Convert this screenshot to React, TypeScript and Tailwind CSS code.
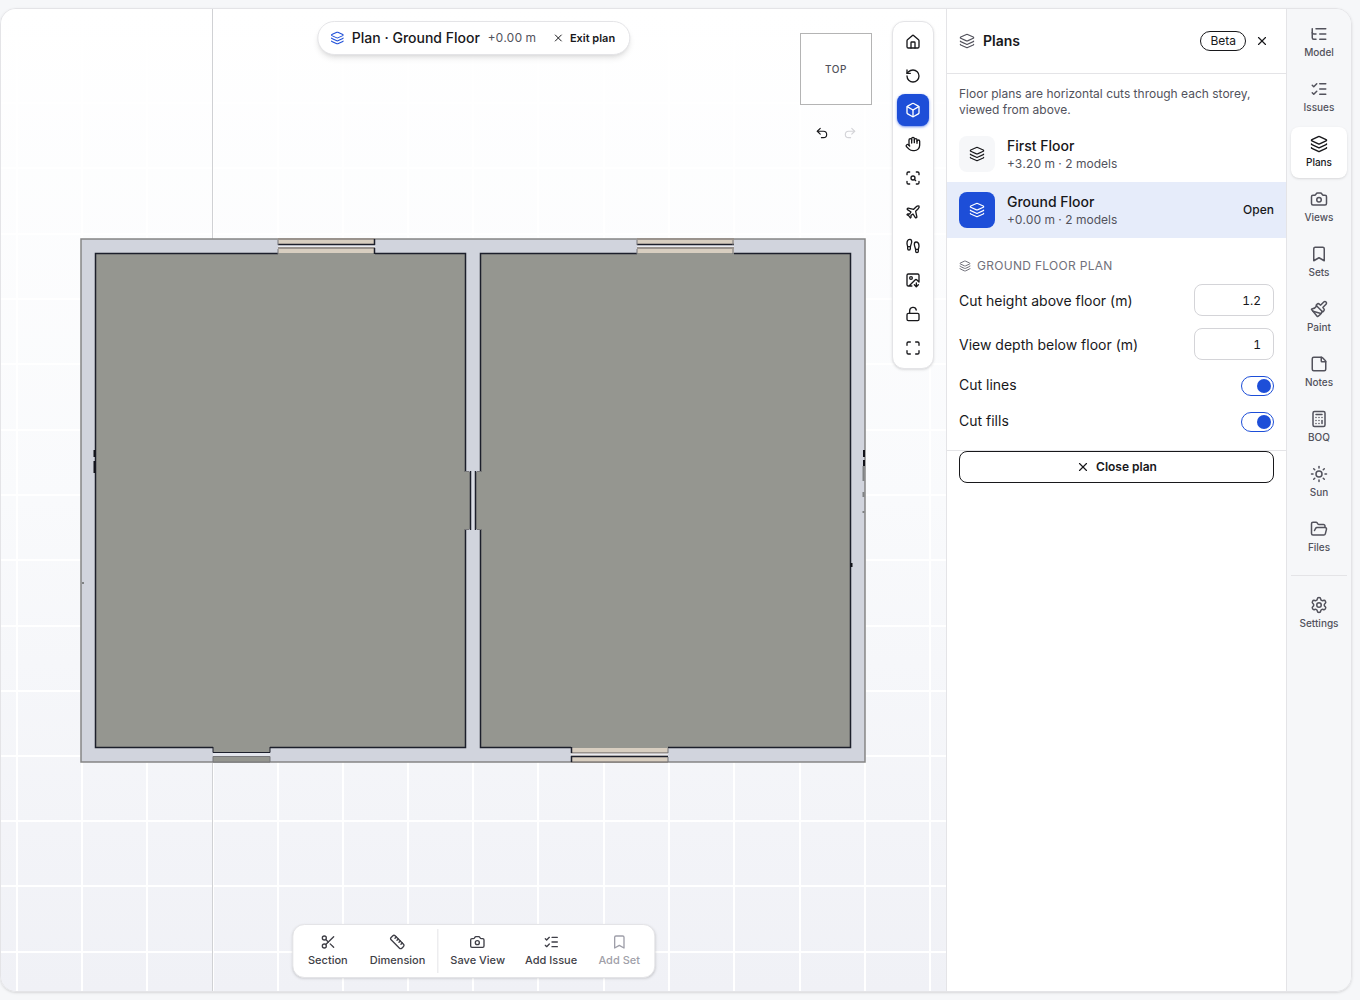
import { useState } from "react";
import {
  Bookmark,
  Box,
  Calculator,
  Camera,
  FolderOpen,
  Footprints,
  Hand,
  House,
  ImageDown,
  Layers,
  ListChecks,
  ListTree,
  LockOpen,
  Maximize,
  Paintbrush,
  Plane,
  Redo2,
  RotateCcw,
  Ruler,
  ScanSearch,
  Scissors,
  Settings,
  StickyNote,
  Sun,
  Undo2,
  X,
  type LucideIcon,
} from "lucide-react";
import clsx from "clsx";

interface Item {
  label: string;
  icon: LucideIcon;
  disabled?: boolean;
}

const railItems: Item[] = [
  { label: "Model", icon: ListTree },
  { label: "Issues", icon: ListChecks },
  { label: "Plans", icon: Layers },
  { label: "Views", icon: Camera },
  { label: "Sets", icon: Bookmark },
  { label: "Paint", icon: Paintbrush },
  { label: "Notes", icon: StickyNote },
  { label: "BOQ", icon: Calculator },
  { label: "Sun", icon: Sun },
  { label: "Files", icon: FolderOpen },
];

const viewTools: Item[] = [
  { label: "Home view", icon: House },
  { label: "Reset", icon: RotateCcw },
  { label: "Orbit", icon: Box },
  { label: "Pan", icon: Hand },
  { label: "Zoom to selection", icon: ScanSearch },
  { label: "Fly", icon: Plane },
  { label: "Walk", icon: Footprints },
  { label: "Export image", icon: ImageDown },
  { label: "Unlock", icon: LockOpen },
  { label: "Fullscreen", icon: Maximize },
];

const measureActions: Item[] = [
  { label: "Section", icon: Scissors },
  { label: "Dimension", icon: Ruler },
];

const addActions: Item[] = [
  { label: "Save View", icon: Camera },
  { label: "Add Issue", icon: ListChecks },
  { label: "Add Set", icon: Bookmark, disabled: true },
];

const floors = [
  { name: "First Floor", detail: "+3.20 m · 2 models" },
  { name: "Ground Floor", detail: "+0.00 m · 2 models" },
];

const gridX = [17, 82, 147, 213, 278, 343, 408, 473, 538, 604, 669, 734, 800, 865, 930];
const gridY = [38, 103, 168, 234, 299, 364, 430, 495, 560, 626, 691, 756, 821, 886, 952];

const PlanDrawing = () => (
  <svg
    className="absolute inset-0 size-full"
    viewBox="1 9 945 982"
    preserveAspectRatio="xMidYMid slice"
    role="img"
    aria-label="Ground floor plan"
  >
    <g stroke="#ffffff" strokeWidth="2">
      {gridX.map((x) => (
        <line key={x} x1={x} x2={x} y1="-500" y2="1500" />
      ))}
      {gridY.map((y) => (
        <line key={y} x1="-1000" x2="2000" y1={y} y2={y} />
      ))}
    </g>
    <line x1="212.5" x2="212.5" y1="-500" y2="1500" stroke="#d0d1d4" />

    {/* walls and slabs */}
    <rect x="81" y="239" width="784" height="523" fill="#d1d4dd" stroke="#858585" strokeWidth="1.5" />
    <rect x="95.5" y="253.5" width="370" height="494" fill="#959690" stroke="#1c1f2b" strokeWidth="1.5" />
    <rect x="480.5" y="253.5" width="370" height="494" fill="#959690" stroke="#1c1f2b" strokeWidth="1.5" />

    {/* windows, north side */}
    {[278, 637].map((x) => (
      <g key={x}>
        <rect x={x} y="238" width="97" height="15" fill="#d8cec0" />
        <path d={`M${x} 239h97M${x} 248h97`} stroke="#85807c" strokeWidth="1.5" />
        <path d={`M${x} 246h97`} stroke="#e9eaf0" strokeWidth="2" />
        <path d={`M${x} 244.5h97`} stroke="#1c1f2b" strokeWidth="1.5" />
        <path d={`M${x} 254h97`} stroke="#959690" strokeWidth="2" />
      </g>
    ))}
    <path d="M278 240v5M278 249v5M637 240v5M637 249v5M733 240v5M733 249v5" stroke="#77777a" />
    <path d="M374.5 239v6M374.5 248v6" stroke="#1c1f2b" strokeWidth="1.5" />

    {/* window, south side */}
    <rect x="571" y="748" width="97" height="14" fill="#d8cec0" />
    <path d="M571 747h97" stroke="#959690" strokeWidth="2" />
    <path d="M571 753h97M571 762h97" stroke="#85807c" strokeWidth="1.5" />
    <path d="M571 754.5h97" stroke="#e9eaf0" strokeWidth="2" />
    <path d="M571 756.5h97M571.5 747v6M571.5 756v6" stroke="#1c1f2b" strokeWidth="1.5" />
    <path d="M668 748v5M668 757v5" stroke="#77777a" />

    {/* entrance */}
    <rect x="213" y="746" width="57" height="16.5" fill="#959690" />
    <rect x="213" y="753" width="57" height="3" fill="#e3e5ec" />
    <path d="M213 747v5.5h57v-5.5" fill="none" stroke="#1c1f2b" />
    <path d="M213 756.5h57v5.5h-57z" fill="none" stroke="#77777a" />

    {/* inner door */}
    <rect x="464" y="472" width="18" height="57" fill="#959690" />
    <rect x="470.5" y="471" width="5" height="59" fill="#d9dce4" />
    <path d="M470.5 471v59M475.5 471v59" stroke="#1c1f2b" strokeWidth="1.5" />
    <path d="M465 471.5h4M477 471.5h4M465 529.5h4M477 529.5h4" stroke="#77777a" />

    {/* cut artefacts along the outer walls */}
    <path d="M94.5 450v7M94.5 461v12M864 450v7M864 460v6M851.5 563v4" stroke="#12131a" strokeWidth="2" />
    <path d="M863.5 466v15M863.5 492v5M863.5 511v2M83 582v2" stroke="#808284" strokeWidth="2" />
  </svg>
);

const ActionButton = ({ label, icon: Icon, disabled }: Item) => (
  <button
    type="button"
    disabled={disabled}
    className="flex min-w-[60px] flex-col items-center gap-0.5 rounded-lg px-2 py-1 text-[11px] leading-4 font-medium text-zinc-700 disabled:text-zinc-400"
  >
    <Icon size={16} />
    {label}
  </button>
);

const RailButton = ({ label, icon: Icon, active }: Item & { active?: boolean }) => (
  <button
    type="button"
    className={clsx(
      "flex w-full flex-col items-center gap-0.5 rounded-lg py-2 text-[10px] leading-[15px] font-medium",
      active ? "bg-white text-zinc-900 shadow-sm" : "text-zinc-600"
    )}
  >
    <Icon size={18} />
    {label}
  </button>
);

interface NumberFieldProps {
  id: string;
  label: string;
  value: string;
}

const NumberField = ({ id, label, value }: NumberFieldProps) => (
  <div className="flex items-center justify-between">
    <label htmlFor={id} className="pt-0.5">
      {label}
    </label>
    <input
      id={id}
      type="text"
      inputMode="decimal"
      defaultValue={value}
      className="h-8 w-20 rounded-lg border border-zinc-300 bg-white px-3 text-right text-xs tabular-nums"
    />
  </div>
);

interface SwitchFieldProps {
  id: string;
  label: string;
}

const SwitchField = ({ id, label }: SwitchFieldProps) => (
  <div className="flex h-6 items-end justify-between">
    <label htmlFor={id} className="leading-[22px]">
      {label}
    </label>
    <input
      id={id}
      type="checkbox"
      role="switch"
      defaultChecked
      className="flex h-5 w-[33px] appearance-none items-center rounded-full border border-zinc-400 bg-white px-0.5 before:size-3.5 before:rounded-full before:bg-zinc-400 checked:justify-end checked:border-[#1d4ed8] checked:before:bg-[#1d4ed8]"
    />
  </div>
);

const Viewport = () => (
  <main className="relative min-w-0 flex-1 overflow-hidden bg-linear-to-b from-white via-[#f9fafc] to-[#f0f1f6]">
    <PlanDrawing />

    <div className="absolute top-3 left-1/2 flex h-[34px] -translate-x-1/2 items-center gap-2 rounded-full border border-zinc-200 bg-white px-3 whitespace-nowrap shadow-md">
      <Layers size={14} strokeWidth={1.75} className="text-[#1d4ed8]" />
      <span className="text-sm font-medium">Plan · Ground Floor</span>
      <span className="text-xs text-zinc-600 tabular-nums">+0.00 m</span>
      <button type="button" className="ml-1.5 flex items-center gap-1.5 px-0.5 text-[11px] font-semibold">
        <X size={12} />
        Exit plan
      </button>
    </div>

    <div className="absolute top-6 right-[74px] flex flex-col items-center gap-4">
      <button
        type="button"
        className="size-[72px] border border-[#b4b4b4] bg-white text-[10px] font-medium tracking-wider text-zinc-600"
      >
        TOP
      </button>
      <div className="flex gap-1">
        <button type="button" aria-label="Undo" className="flex size-6 items-center justify-center">
          <Undo2 size={14} />
        </button>
        <button type="button" aria-label="Redo" disabled className="flex size-6 items-center justify-center text-zinc-300">
          <Redo2 size={14} />
        </button>
      </div>
    </div>

    <div className="absolute top-3 right-3 flex flex-col gap-0.5 rounded-xl border border-zinc-200 bg-white p-1 shadow-sm">
      {viewTools.map(({ label, icon: Icon }) => (
        <button
          key={label}
          type="button"
          aria-label={label}
          className={clsx(
            "flex size-8 items-center justify-center rounded-lg",
            label === "Orbit" && "bg-[#1d4ed8] text-white shadow-sm shadow-blue-700/50"
          )}
        >
          <Icon size={16} />
        </button>
      ))}
    </div>

    <div className="absolute bottom-[13px] left-1/2 flex -translate-x-1/2 gap-1 rounded-xl border border-zinc-200 bg-white p-[5px] whitespace-nowrap shadow-sm">
      {measureActions.map((action) => (
        <ActionButton key={action.label} {...action} />
      ))}
      <div className="-my-px w-px bg-zinc-200" />
      {addActions.map((action) => (
        <ActionButton key={action.label} {...action} />
      ))}
    </div>
  </main>
);

const PlansPanel = () => {
  const [open, setOpen] = useState("Ground Floor");

  return (
    <section className="w-[340px] shrink-0 border-l border-zinc-200 bg-white text-sm">
      <header className="flex h-[65px] items-center gap-2 border-b border-zinc-200 px-3">
        <Layers size={16} strokeWidth={1.75} className="text-zinc-600" />
        <h2 className="flex-1 font-semibold">Plans</h2>
        <div className="flex items-center gap-1">
          <span className="flex h-5 items-center rounded-full border border-zinc-900 px-[9px] text-xs">Beta</span>
          <button type="button" aria-label="Close panel" className="flex size-6 items-center justify-center">
            <X size={14} />
          </button>
        </div>
      </header>

      <p className="px-3 pt-3 pb-2 text-xs text-zinc-600">
        Floor plans are horizontal cuts through each storey, viewed from above.
      </p>

      {floors.map(({ name, detail }) => (
        <button
          key={name}
          type="button"
          onClick={() => setOpen(name)}
          className={clsx("flex h-14 w-full items-center gap-3 px-3 text-left", open === name && "bg-[#e6ecfa]")}
        >
          <span
            className={clsx(
              "flex size-9 items-center justify-center rounded-lg",
              open === name ? "bg-[#1d4ed8] text-white" : "bg-[#f6f7f9]"
            )}
          >
            <Layers size={16} strokeWidth={1.75} />
          </span>
          <span className="flex flex-1 flex-col">
            <span className="font-medium">{name}</span>
            <span className="text-xs text-zinc-600 tabular-nums">{detail}</span>
          </span>
          {open === name && <span className="text-xs font-medium">Open</span>}
        </button>
      ))}

      <div className="flex flex-col gap-3 px-3 pt-5 pb-[18px]">
        <h3 className="-mb-0.5 flex items-center gap-1.5 text-xs tracking-wide text-zinc-500 uppercase">
          <Layers size={12} />
          Ground Floor plan
        </h3>
        <NumberField id="cut-height" label="Cut height above floor (m)" value="1.2" />
        <NumberField id="view-depth" label="View depth below floor (m)" value="1" />
        <SwitchField id="cut-lines" label="Cut lines" />
        <SwitchField id="cut-fills" label="Cut fills" />
      </div>

      <div className="border-t border-zinc-200 px-3">
        <button
          type="button"
          className="flex h-8 w-full items-center justify-center gap-1.5 rounded-lg border border-zinc-900 text-xs font-semibold"
        >
          <X size={14} />
          Close plan
        </button>
      </div>
    </section>
  );
};

export default function App() {
  return (
    <div className="h-screen bg-[#f6f7f9] py-2 pr-2 font-['Inter',sans-serif] text-zinc-900">
      <div className="flex h-full overflow-hidden rounded-2xl border border-zinc-200 shadow-sm">
        <Viewport />
        <PlansPanel />
        <nav className="flex w-[65px] shrink-0 flex-col gap-1 border-l border-zinc-200 bg-[#f6f7f9] px-1 py-2">
          {railItems.map((item) => (
            <RailButton key={item.label} {...item} active={item.label === "Plans"} />
          ))}
          <hr className="my-2 border-zinc-200" />
          <RailButton label="Settings" icon={Settings} />
        </nav>
      </div>
    </div>
  );
}
